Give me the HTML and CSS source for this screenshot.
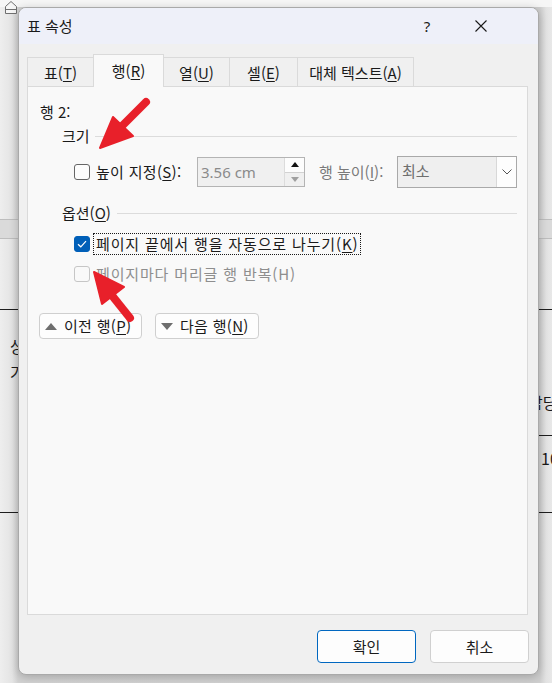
FILE: index.html
```html
<!DOCTYPE html>
<html lang="ko">

<head>
    <meta charset="UTF-8">
    <meta name="viewport" content="width=device-width, initial-scale=1.0">
    <title>표 속성</title>
    <link rel="stylesheet" href="styles.css">
</head>

<body>
    <!-- bits of the document peeking out behind the dialog -->
    <svg class="indent-marker" width="14" height="14" viewBox="0 0 14 14">
        <path d="M1.5 13.5V6.5L7 1.5L12.5 6.5V13.5Z M1.5 9.5H12.5" fill="#f6f6f6" stroke="#707070" stroke-width="1" />
    </svg>
    <span class="doc-bit bit-left-1">상</span>
    <span class="doc-bit bit-left-2">가</span>
    <span class="doc-bit bit-right-1">담당</span>
    <span class="doc-bit bit-right-2">10</span>

    <div class="dialog">
        <div class="titlebar">
            <span class="title">표 속성</span>
            <span class="help">?</span>
            <span class="close">
                <svg width="12" height="12" viewBox="0 0 12 12">
                    <path d="M0.5 0.5L11.5 11.5M11.5 0.5L0.5 11.5" stroke="#1a1a1a" stroke-width="1.1" />
                </svg>
            </span>
        </div>

        <div class="tabs">
            <div class="tab tab-table">표(<u>T</u>)</div>
            <div class="tab tab-row active">행(<u>R</u>)</div>
            <div class="tab tab-col">열(<u>U</u>)</div>
            <div class="tab tab-cell">셀(<u>E</u>)</div>
            <div class="tab tab-alt">대체 텍스트(<u>A</u>)</div>
        </div>

        <div class="panel">
            <div class="row-title">행 2:</div>

            <div class="group-head">
                <span>크기</span>
                <span class="rule"></span>
            </div>
            <div class="size-row">
                <div class="check size-check">
                    <span class="box"></span>
                    <span class="label-text">높이 지정(<u>S</u>):</span>
                </div>
                <div class="spin">
                    <span class="spin-value">3.56 cm</span>
                    <span class="spin-btns">
                        <span class="spin-up"><span class="tri-up"></span></span>
                        <span class="spin-down"><span class="tri-down"></span></span>
                    </span>
                </div>
                <span class="field-label">행 높이(<u>I</u>):</span>
                <div class="select">
                    <span class="select-value">최소</span>
                    <span class="select-btn">
                        <svg width="10" height="6" viewBox="0 0 10 6">
                            <path d="M0.5 0.5L5 5L9.5 0.5" fill="none" stroke="#555" stroke-width="1" />
                        </svg>
                    </span>
                </div>
            </div>

            <div class="group-head options-head">
                <span>옵션(<u>O</u>)</span>
                <span class="rule"></span>
            </div>
            <div class="check option-row">
                <span class="box checked">
                    <svg width="10" height="8" viewBox="0 0 10 8">
                        <path d="M1 4.2L3.8 6.8L9 1.2" fill="none" stroke="#fff" stroke-width="1.2" />
                    </svg>
                </span>
                <span class="focus">페이지 끝에서 행을 자동으로 나누기(<u>K</u>)</span>
            </div>
            <div class="check option-row disabled">
                <span class="box"></span>
                <span class="focus-off">페이지마다 머리글 행 반복(H)</span>
            </div>

            <div class="nav-row">
                <button class="nav-btn prev">
                    <span class="nav-tri up"></span>
                    <span class="nav-text">이전 행(<u>P</u>)</span>
                </button>
                <button class="nav-btn next">
                    <span class="nav-tri down"></span>
                    <span class="nav-text">다음 행(<u>N</u>)</span>
                </button>
            </div>
        </div>

        <div class="footer">
            <button class="btn primary">확인</button>
            <button class="btn">취소</button>
        </div>
    </div>

    <!-- red annotation arrows drawn over the screenshot -->
    <svg class="marks" width="552" height="683" viewBox="0 0 552 683">
        <g fill="#e8202a" stroke="#e8202a" stroke-linejoin="round">
            <line x1="146" y1="102" x2="118" y2="130" stroke-width="8" stroke-linecap="round" />
            <polygon points="100,148 113,117 133,136" stroke-width="2" />
            <line x1="130" y1="318" x2="110" y2="293" stroke-width="8" stroke-linecap="round" />
            <polygon points="94,272 124,287 102,304" stroke-width="2" />
        </g>
    </svg>
</body>

</html>
```

FILE: styles.css
```css
* {
    margin: 0;
    padding: 0;
    box-sizing: border-box;
}

body {
    width: 552px;
    height: 683px;
    overflow: hidden;
    padding: 7px 0 0 18px;
    font-family: "Noto Sans CJK KR", "Noto Sans", sans-serif;
    font-size: 15px;
    color: #1a1a1a;
    position: relative;
    background:
        linear-gradient(#f6f6f6, #f6f6f6) 0 0 / 100% 7px no-repeat,
        linear-gradient(#1e1e1e, #1e1e1e) 0 309px / 100% 1px no-repeat,
        linear-gradient(#1e1e1e, #1e1e1e) 0 512px / 100% 1px no-repeat,
        linear-gradient(#1e1e1e, #1e1e1e) 538px 435px / 100% 1px no-repeat,
        linear-gradient(#bdbdbd, #bdbdbd) 0 219px / 100% 1px no-repeat,
        linear-gradient(#bdbdbd, #bdbdbd) 0 238px / 100% 1px no-repeat,
        linear-gradient(#dadada, #dadada) 0 219px / 100% 19px no-repeat,
        linear-gradient(90deg, #eeeeee 0, #e4e4e4 12px, #d2d2d2 18px, #cfcfcf 540px, #e2e2e2 546px, #e8e8e8 552px);
}

u {
    text-decoration: underline;
    text-underline-offset: 2px;
}

/* ---------- document behind ---------- */

.indent-marker {
    position: absolute;
    left: 4px;
    top: 0;
}

.doc-bit {
    position: absolute;
    font-size: 16px;
    line-height: 20px;
    color: #1a1a1a;
    white-space: nowrap;
}

.bit-left-1 {
    left: 10px;
    top: 336px;
}

.bit-left-2 {
    left: 10px;
    top: 362px;
}

.bit-right-1 {
    left: 528px;
    top: 392px;
}

.bit-right-2 {
    left: 541px;
    top: 448px;
}

/* ---------- dialog ---------- */

.dialog {
    position: relative;
    z-index: 1;
    width: 521px;
    height: 668px;
    background: #f0f0f0;
    border: 1px solid #a9a9a9;
    border-radius: 8px;
    box-shadow: 0 2px 10px rgba(0, 0, 0, 0.22);
    overflow: hidden;
    display: flex;
    flex-direction: column;
}

.titlebar {
    height: 36px;
    background: #eef0f9;
    display: flex;
    align-items: center;
    padding: 0 45px 0 8px;
    flex-shrink: 0;
}

.title {
    font-size: 15px;
    line-height: 20px;
}

.help {
    margin-left: auto;
    width: 20px;
    text-align: center;
    font-family: "Noto Sans", sans-serif;
    font-size: 15px;
    line-height: 20px;
}

.close {
    margin-left: 32px;
    width: 24px;
    height: 20px;
    display: flex;
    align-items: center;
    justify-content: center;
}

/* tabs */

.tabs {
    display: flex;
    align-items: flex-end;
    height: 32px;
    margin-top: 10px;
    padding-left: 8px;
    flex-shrink: 0;
    position: relative;
    z-index: 2;
}

.tab {
    height: 29px;
    border: 1px solid #dadada;
    border-bottom: none;
    margin-right: -1px;
    background: #f0f0f0;
    display: flex;
    align-items: center;
    justify-content: center;
    line-height: 20px;
    padding-top: 1px;
    white-space: nowrap;
}

.tab-table {
    width: 67px;
}

.tab-row {
    width: 71px;
}

.tab-col {
    width: 67px;
}

.tab-cell {
    width: 69px;
}

.tab-alt {
    width: 117px;
}

.tab.active {
    height: 33px;
    margin-bottom: -1px;
    background: #f9f9f9;
    padding-top: 0;
    padding-bottom: 1px;
}

/* panel */

.panel {
    width: 501px;
    height: 529px;
    margin-left: 8px;
    background: #f9f9f9;
    border: 1px solid #dadada;
    padding: 15px 10px 0 11px;
    flex-shrink: 0;
}

.row-title {
    line-height: 20px;
    padding-left: 1px;
}

.group-head {
    display: flex;
    align-items: center;
    gap: 5px;
    margin: 4px 0 0 23px;
    line-height: 20px;
}

.group-head .rule {
    flex: 1;
    height: 1px;
    background: #dcdcdc;
    margin-top: 1px;
}

.options-head {
    margin-top: 15px;
}

.options-head .rule {
    margin-left: 1px;
}

.check {
    display: flex;
    align-items: center;
    line-height: 20px;
    white-space: nowrap;
}

.box {
    width: 16px;
    height: 16px;
    border: 1px solid #666;
    border-radius: 3px;
    background: #fdfdfd;
    display: flex;
    align-items: center;
    justify-content: center;
    flex-shrink: 0;
}

.box.checked {
    background: #005fb8;
    border-color: #005fb8;
}

.size-row {
    display: flex;
    align-items: center;
    height: 32px;
    margin: 10px 0 0 35px;
}

.size-check {
    width: 123px;
    gap: 6px;
}

.label-text {
    letter-spacing: 0.3px;
}

.spin {
    width: 108px;
    height: 30px;
    border: 1px solid #b4b4b4;
    background: #f0f0f0;
    display: flex;
    align-items: center;
}

.spin-value {
    flex: 1;
    color: #8a8a8a;
    padding-left: 3px;
    line-height: 20px;
    font-family: "Noto Sans", sans-serif;
    font-size: 15px;
}

.spin-btns {
    width: 20px;
    height: 28px;
    display: flex;
    flex-direction: column;
    border-left: 1px solid #dcdcdc;
}

.spin-up,
.spin-down {
    flex: 1;
    display: flex;
    align-items: center;
    justify-content: center;
}

.spin-up {
    background: #fdfdfd;
    border-bottom: 1px solid #d2d2d2;
}

.spin-down {
    background: #f0f0f0;
}

.tri-up {
    border-left: 4px solid transparent;
    border-right: 4px solid transparent;
    border-bottom: 5px solid #111;
}

.tri-down {
    border-left: 4px solid transparent;
    border-right: 4px solid transparent;
    border-top: 5px solid #a0a0a0;
}

.field-label {
    width: 78px;
    margin-left: 14px;
    color: #7a7a7a;
    line-height: 20px;
    white-space: nowrap;
}

.select {
    width: 120px;
    height: 32px;
    border: 1px solid #a9a9a9;
    background: #efefef;
    display: flex;
    align-items: stretch;
}

.select-value {
    flex: 1;
    color: #6e6e6e;
    padding-left: 4px;
    line-height: 28px;
}

.select-btn {
    width: 20px;
    background: #fdfdfd;
    border-left: 1px solid #d8d8d8;
    display: flex;
    align-items: center;
    justify-content: center;
}

.option-row {
    height: 22px;
    margin: 10px 0 0 35px;
    gap: 3px;
}

.option-row.disabled {
    margin-top: 8px;
    color: #8e8e8e;
}

.option-row.disabled .box {
    border-color: #c6c6c6;
    background: #f9f9f9;
}

.focus,
.focus-off {
    padding: 0 2px;
    border: 1px dotted #1a1a1a;
    line-height: 20px;
    letter-spacing: 0.85px;
}

.focus-off {
    border-color: transparent;
}

.nav-row {
    display: flex;
    gap: 13px;
    margin-top: 28px;
}

.nav-btn {
    height: 26px;
    border: 1px solid #cfcfcf;
    border-radius: 4px;
    background: #fdfdfd;
    font-family: inherit;
    font-size: 15px;
    color: #1a1a1a;
    display: flex;
    align-items: center;
    gap: 7px;
    padding-left: 5px;
    line-height: 20px;
}

.nav-text {
    white-space: nowrap;
    letter-spacing: 0.3px;
}

.nav-btn.prev {
    width: 103px;
}

.nav-btn.next {
    width: 104px;
}

.nav-tri {
    width: 0;
    height: 0;
    border-left: 6px solid transparent;
    border-right: 6px solid transparent;
}

.nav-tri.up {
    border-bottom: 7px solid #6e6e6e;
}

.nav-tri.down {
    border-top: 7px solid #6e6e6e;
}

/* footer */

.footer {
    display: flex;
    justify-content: flex-end;
    gap: 14px;
    margin-top: 15px;
    padding-right: 9px;
}

.btn {
    width: 99px;
    height: 33px;
    border: 1px solid #d0d0d0;
    border-radius: 4px;
    background: #fdfdfd;
    font-family: inherit;
    font-size: 15px;
    color: #1a1a1a;
}

.btn.primary {
    border-color: #0067c0;
}

.marks {
    position: absolute;
    left: 0;
    top: 0;
    z-index: 5;
    pointer-events: none;
}
```
